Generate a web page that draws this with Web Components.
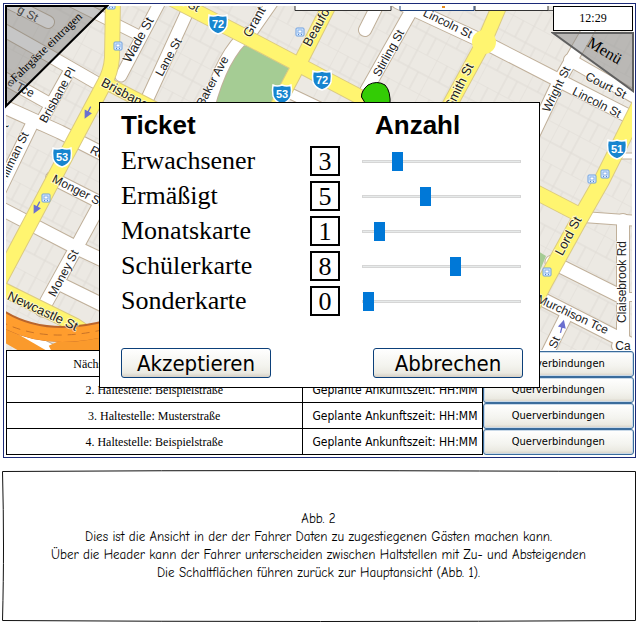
<!DOCTYPE html>
<html lang="de">
<head>
<meta charset="utf-8">
<title>Fahreransicht</title>
<style>
body{margin:0;padding:3px 2px 0 3px;background:#fff;color:#000;font-family:"Liberation Serif",serif}
</style>
</head>
<body>
<driver-frame>
  <city-map></city-map>
  <corner-button slot="left" side="left">Fahrgäste eintragen</corner-button>
  <corner-button slot="right" side="right">Menü</corner-button>
  <clock-box slot="clock">12:29</clock-box>
  <stop-table></stop-table>
  <ticket-dialog slot="dialog">
    <ticket-row name="Erwachsener" count="3" pos="29"></ticket-row>
    <ticket-row name="Ermäßigt" count="5" pos="58"></ticket-row>
    <ticket-row name="Monatskarte" count="1" pos="11"></ticket-row>
    <ticket-row name="Schülerkarte" count="8" pos="88"></ticket-row>
    <ticket-row name="Sonderkarte" count="0" pos="0"></ticket-row>
    <soft-button slot="actions" large>Akzeptieren</soft-button>
    <soft-button slot="actions" large>Abbrechen</soft-button>
  </ticket-dialog>
</driver-frame>
<figure-note>
  <p>Abb. 2</p>
  <p>Dies ist die Ansicht in der der Fahrer Daten zu zugestiegenen Gästen machen kann.</p>
  <p>Über die Header kann der Fahrer unterscheiden zwischen Haltstellen mit Zu- und Absteigenden</p>
  <p>Die Schaltflächen führen zurück zur Hauptansicht (Abb. 1).</p>
</figure-note>
<script>
class Base extends HTMLElement{
  constructor(){super();this.attachShadow({mode:'open'});}
  connectedCallback(){this.shadowRoot.innerHTML=this.render();}
}

customElements.define('driver-frame',class extends Base{render(){return `
<style>
:host{display:block;position:relative;border:1px solid #1c2b78;padding:2px 1px 2px 2px}
.left,.right,.clock,.dialog{position:absolute}
.left{top:1px;left:1px}
.right{top:27px;right:1px}
.clock{top:2px;right:2px}
.dialog{top:98px;left:0;right:0}
</style>
<slot></slot>
<div class="left"><slot name="left"></slot></div>
<div class="right"><slot name="right"></slot></div>
<div class="clock"><slot name="clock"></slot></div>
<div class="dialog"><slot name="dialog"></slot></div>`}});

customElements.define('clock-box',class extends Base{render(){return `
<style>:host{display:block;box-sizing:border-box;width:80px;border:1px solid #000;background:#fff;font-size:12px;line-height:23px;text-align:center}</style><slot></slot>`}});

customElements.define('corner-button',class extends Base{render(){
  const t=this.textContent, left=this.getAttribute('side')==='left';
  return `<style>
:host{display:block}
button{display:block;padding:0;border:0;background:none;color:#000;font:inherit}
svg{display:block;font-family:"Liberation Serif",serif}
</style>
<button type="button">${left?
`<svg width="104" height="104" viewBox="5 5 104 104"><path d="M6 6H107L6 106Z" fill="#777" fill-opacity=".42" stroke="#000" stroke-width="2"/><text x="0" y="0" font-size="12" transform="translate(49 50) rotate(-44)" text-anchor="middle">${t}</text></svg>`:
`<svg width="83" height="62" viewBox="551 30 83 62"><path d="M553 32H633V90Z" fill="#888" fill-opacity=".5" stroke="#606060" stroke-width="2"/><text font-size="16" transform="translate(602 54) rotate(31)" text-anchor="middle">${t}</text></svg>`}</button>`}});

customElements.define('city-map',class extends Base{render(){
  const white=[
    ['M0 28L48 55L95 82',12],['M8 2L48 22',12],['M72 2L140 36',10],['M162 -2L121 76',11],['M190 6L145 104',12],
    ['M248 33Q222 54 208 108',12],['M274 0L246 40',11],['M378 4L365 30',12],['M414 6L370 84L355 110',12],
    ['M283 90L325 110',10],['M70 70L40 124',11],['M0 76L50 104',12],['M0 105L60 132L115 160',13],['M32 124L0 190',12],
    ['M52 178L115 210',12],['M0 208L75 247L115 266',13],['M100 204L75 250L42 310',13],['M60 284L115 311',13],
    ['M398 2L484 42L560 81L640 122',13],['M594 20L558 83L530 142',12],['M570 60L640 100',12],
    ['M583 217L640 221',10],['M623 220V352',12],['M552 262L622 297',13],['M530 293L628 343',13],['M568 312L546 356',12],
    ['M618 346H640',12],['M8 330L60 356',14],['M617 156H640',5],['M620 297H640',8]];
  const yellow=[['M113 0L112 58Q111 72 104 84L52 182L0 280',14],['M104 82L160 111',12],['M172 -1L246 37L360 97L380 108',14],
    ['M332 0L303 57L276 108',13],['M502 0L484 42L448 108',14],['M642 100L602 180L578 222L545 282L528 314',15],
    ['M520 184L580 215',14],['M0 288L75 325L115 352',13]];
  const edge=a=>a.map(([d,w])=>`<path d="${d}" stroke-width="${w+2}"/>`).join('');
  const fill=a=>a.map(([d,w])=>`<path d="${d}" stroke-width="${w}"/>`).join('');
  const shield=(x,y,n)=>`<g transform="translate(${x} ${y})"><path d="M-9 -9Q-5 -7 0 -9Q5 -7 9 -9Q10 -4 9 2Q7 8 0 10Q-7 8 -9 2Q-10 -4 -9 -9Z" fill="#1785cf" stroke="#fff" stroke-width="1.5"/><text class="n" y="4" text-anchor="middle">${n}</text></g>`;
  const bus=(x,y)=>`<g transform="translate(${x} ${y})"><rect x="-4" y="-4" width="8" height="8" rx="1" fill="#dcecff" stroke="#6d9fe0"/><rect x="-2" y="-2" width="4" height="3" fill="#fff" stroke="#6d9fe0" stroke-width=".8"/><path d="M-2 2.5H-1M1 2.5H2" stroke="#5586cc"/></g>`;
  const arrow=(x,y,r)=>`<path transform="translate(${x} ${y}) rotate(${r})" d="M0 6V-1M-3 0L0 -6L3 0Z" fill="#6b70cf" stroke="#6b70cf" stroke-width="1.3"/>`;
  const names=[['g St',26,17,28],['Wade St',142,42,-61,13],['Lane St',172,59,-61],['Brisbane Pl',61,97,-61],['Baker Ave',216,83,-62],
    ['Grant St',262,17,-61,13],['Beaufort',322,26,-61,13],['Stirling St',392,55,-61],['Lincoln St',446,27,26],['Smith St',463,88,-64,13],
    ['Wright St',560,91,-64],['Court St',604,89,27],['Lincoln St',595,106,27],['Brisbane St',130,101,28,13],['Ro',96,156,28],
    ['e Tce',19,91,28],['Hillman St',17,159,-64],['Monger St',76,194,27],['Money St',67,275,-62],['Newcastle St',41,315,25,13],
    ['Lord St',572,238,-62,13],['Claisebrook Rd',626,282,-90],['Murchison Tce',571,318,25],['St',558,344,-66],['Ca',623,350,0],
    ['t St',189,8,27],['t',8,127,-64]];
  return `<style>
:host{display:block;padding-right:2px}
svg{display:block;width:100%;height:auto;font-family:"Liberation Sans",sans-serif}
.s{font-size:12px;fill:#222;stroke:#fff;stroke-opacity:.6;stroke-width:2px;paint-order:stroke;text-anchor:middle}
.m{font-size:13px}
.n{font-size:11px;font-weight:bold;fill:#fff}
</style>
<svg viewBox="6 6 626 344" role="img" aria-label="Stadtplan">
<defs><pattern id="lots" width="46" height="38" patternUnits="userSpaceOnUse" patternTransform="rotate(28)"><path d="M0 0H46M0 0V38M12 0V19M24 0V38M35 19V38M0 19H46" fill="none" stroke="#dfdbd5" stroke-width="1"/></pattern></defs>
<rect x="6" y="6" width="626" height="344" fill="#ece9e3"/>
<rect x="6" y="6" width="626" height="344" fill="url(#lots)"/>
<path d="M245 45L289 68L271 106H211L217 87Q224 65 245 45ZM520 240L546 256L528 300Z" fill="#a5cc94"/>
<g fill="none" stroke="#c0b09a" stroke-linecap="round" stroke-linejoin="round">${edge(white)}</g>
<g fill="none" stroke="#fff" stroke-linecap="round" stroke-linejoin="round">${fill(white)}</g>
<g fill="none" stroke="#dccb80" stroke-linejoin="round">${edge(yellow)}</g>
<g fill="none" stroke="#fff570" stroke-linejoin="round">${fill(yellow)}</g>
<circle cx="484" cy="42" r="12" fill="#fff570"/>
<g fill="none"><path d="M0 332L42 356M52 352Q75 340 110 344" stroke="#fa9a2c" stroke-width="14"/><path d="M0 317Q45 345 110 327" stroke="#b9652c" stroke-width="16"/><path d="M0 318Q45 346 110 328" stroke="#ff9d2e" stroke-width="14"/><path d="M0 321Q45 345 110 328" stroke="#c97327" stroke-dasharray="8 6"/></g>
${names.map(([t,x,y,r,m])=>`<text class="s${m?' m':''}" transform="translate(${x} ${y}) rotate(${r})">${t}</text>`).join('')}
${shield(218,24,72)}${shield(322,80,72)}${shield(282,94,53)}${shield(62,157,53)}${shield(617,149,51)}
${bus(118,46)}${bus(111,5)}${bus(300,32)}${bus(46,198)}${bus(605,174)}${bus(592,179)}${bus(547,272)}
${arrow(88,112,207)}${arrow(37,207,207)}${arrow(562,327,15)}
<path d="M361.500 97Q361 91 368 85Q377 80 385 85Q391 91 390 106H367Z" fill="#33cc05" stroke="#000"/>
<path d="M295 4V10.500H391V4M475 4V10.500H548V4" fill="#fff" stroke="#333"/><path d="M400 4V10.500H474V4" fill="#fff" stroke="#1d3f78"/><path d="M548 10.500H554" stroke="#555"/><path d="M442 7H445" stroke="#e68a1e" stroke-width="2"/>
</svg>`}});

customElements.define('soft-button',class extends Base{render(){return `
<style>
:host{display:block}
button{display:block;box-sizing:border-box;width:100%;height:26px;padding:0;border:1px solid #3a6c9c;border-radius:3px;background:linear-gradient(#fff,#f3f3ee 60%,#ebeae2 85%,#d6d0c5);color:#000;font:11px/24px "DejaVu Sans Condensed","Noto Sans",sans-serif;box-shadow:inset 0 0 0 1px #c9d9e8}
:host([large]) button{width:150px;height:30px;border-color:#0c407a;font-size:22px;line-height:30px;box-shadow:none}
</style><button type="button"><slot></slot></button>`}});

customElements.define('stop-table',class extends Base{render(){
  const rows=['Nächste Haltestelle: Musterstraße','2. Haltestelle: Beispielstraße','3. Haltestelle: Musterstraße','4. Haltestelle: Beispielstraße'];
  return `<style>
:host{display:block}
table{width:100%;border-collapse:collapse;table-layout:fixed}
.time{width:180px}.link{width:152px}
td{box-sizing:border-box;height:26px;padding:0;border:1px solid #000;font-size:12px;line-height:20px;text-align:center;white-space:nowrap}
td:nth-child(2){padding-left:6px;font-family:"DejaVu Sans Condensed","Noto Sans",sans-serif}
td:nth-child(3){border-width:0 0 0 1px}
</style>
<table><colgroup><col><col class="time"><col class="link"></colgroup>
${rows.map(r=>`<tr><td>${r}</td><td>Geplante Ankunftszeit: HH:MM</td><td><soft-button>Querverbindungen</soft-button></td></tr>`).join('')}</table>`}});

customElements.define('ticket-dialog',class extends Base{render(){return `
<style>
:host{display:block;box-sizing:border-box;width:441px;max-width:96%;margin:0 auto;padding:7px 16px 9px 21px;border:1px solid #000;background:#fff}
header{display:flex;height:36px}
h2{margin:0;font:bold 26px/30px "Liberation Sans",sans-serif}
h2:first-child{flex:0 0 254px}
.rows{display:grid;gap:5px}
footer{display:flex;justify-content:space-between;margin-top:32px}
</style>
<section role="dialog" aria-label="Ticket">
<header><h2>Ticket</h2><h2>Anzahl</h2></header>
<div class="rows"><slot></slot></div>
<footer><slot name="actions"></slot></footer></section>`}});

customElements.define('ticket-row',class extends Base{render(){
  const a=n=>this.getAttribute(n);
  return `<style>
:host{display:flex;align-items:center;height:30px;font-size:26px;line-height:30px;padding-right:2px}
label{flex:0 0 189px}
output{flex:0 0 30px;box-sizing:border-box;height:30px;border:2px solid #000;line-height:28px;text-align:center}
input{flex:1;min-width:0;height:19px;margin:0 0 0 22px;appearance:none;background:none}
input::-webkit-slider-runnable-track{height:3px;box-sizing:border-box;border:1px solid #d6d6d6;background:#e7eaea}
input::-webkit-slider-thumb{appearance:none;width:11px;height:19px;margin-top:-9px;background:#0078d7}
</style>
<label for="r">${a('name')}</label><output for="r">${a('count')}</output>
<input id="r" type="range" min="0" max="148" value="${a('pos')}">`}});

customElements.define('figure-note',class extends Base{render(){return `
<style>
:host{display:block;position:relative;margin:12px 0 0 -1px;padding:40px 8px 40px 7px;font:13px/18px "Comic Sans MS","Comic Neue","Open Sans",sans-serif;text-align:center}
svg{position:absolute;inset:0;width:100%;height:100%}
::slotted(p){margin:0}
</style>
<svg viewBox="0 0 634 152" preserveAspectRatio="none" aria-hidden="true"><path d="M.5 1.500Q160 .500 317 .500Q480 1 633.500 1.500V150.500Q320 152.500 .500 150.500Q1.500 110 1.500 76Q1.500 40 .500 1.500Z" fill="none" stroke="#111" vector-effect="non-scaling-stroke"/></svg>
<slot></slot>`}});
</script>
</body>
</html>
